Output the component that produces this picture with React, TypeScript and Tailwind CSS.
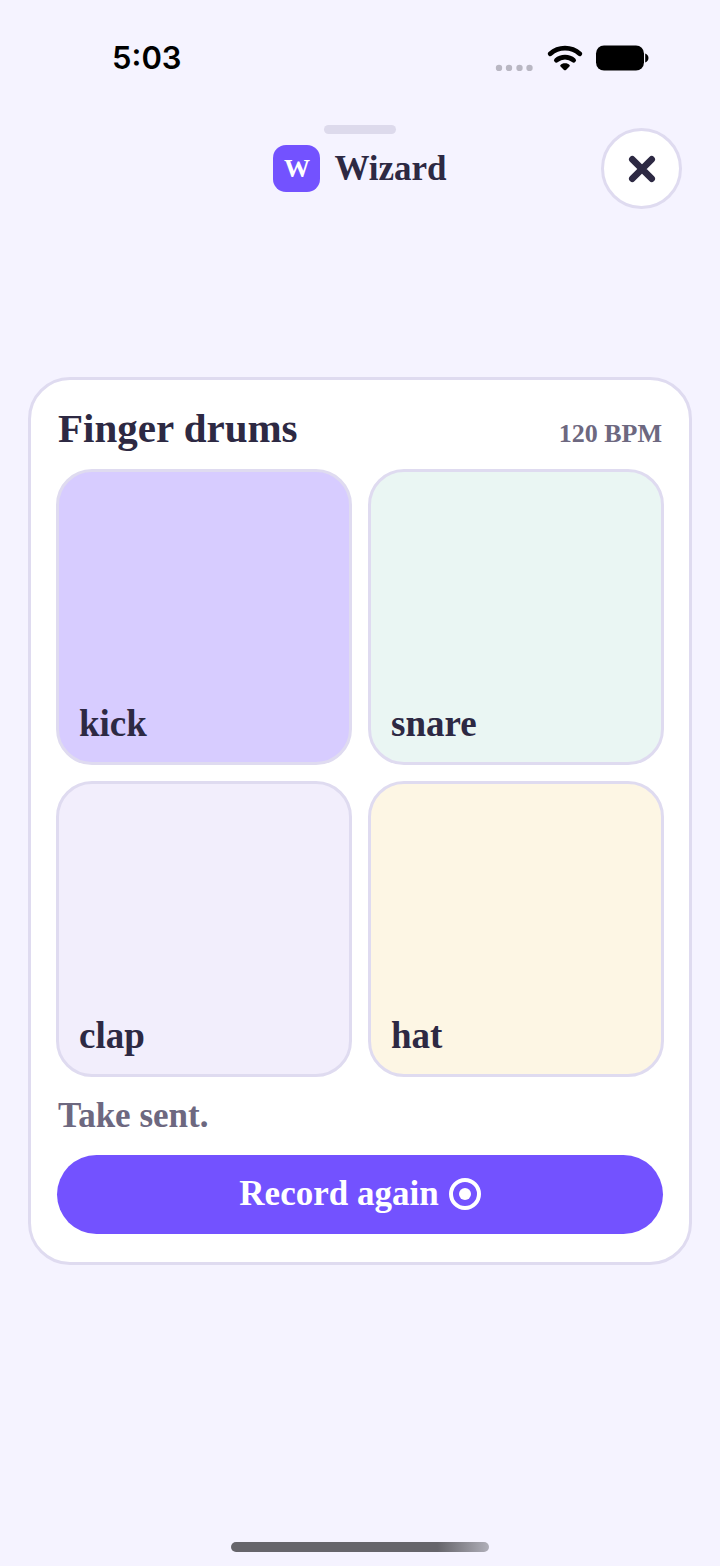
import React from "react"

const pads = [
    { name: "kick", color: "bg-[#d7ccff]" },
    { name: "snare", color: "bg-[#eaf6f3]" },
    { name: "clap", color: "bg-[#f2eefc]" },
    { name: "hat", color: "bg-[#fdf6e4]" },
]

function StatusBar() {
    return (
        <div className="flex h-[116px] items-center justify-between pl-28 pr-[71px] text-black">
            <span className="font-['Inter',sans-serif] text-[31px] font-semibold">5:03</span>
            <div className="flex items-center">
                <svg width="38" height="26" viewBox="0 0 38 26" fill="#b9b7c3" aria-hidden="true">
                    <circle cx="4" cy="23" r="3.2" />
                    <circle cx="14" cy="23" r="3.2" />
                    <circle cx="24.5" cy="23" r="3.2" />
                    <circle cx="34.5" cy="23" r="3.2" />
                </svg>
                <svg className="ml-3.5" width="36" height="28" viewBox="0 0 36 28" fill="none" stroke="#000" strokeLinecap="round" aria-hidden="true">
                    <path d="M3.3 9.8C11.5 2.2 24.5 2.2 32.7 9.8" strokeWidth="4.8" />
                    <path d="M9.4 16.2C14.2 12 21.8 12 26.6 16.2" strokeWidth="4.8" />
                    <path d="M18 19.2C20 19.2 21.6 19.9 22.5 20.9C23 21.5 22.9 22 22.4 22.5L19 25.9C18.4 26.5 17.6 26.5 17 25.9L13.6 22.5C13.1 22 13 21.5 13.5 20.9C14.4 19.9 16 19.2 18 19.2Z" fill="#000" stroke="none" />
                </svg>
                <svg className="ml-3" width="54" height="26" viewBox="0 0 54 26" aria-hidden="true">
                    <rect x="1" y="0.5" width="48" height="25" rx="8" />
                    <path d="M50.2 8.6C52.2 9.4 53.5 11 53.5 13C53.5 15 52.2 16.6 50.2 17.4Z" />
                </svg>
            </div>
        </div>
    )
}

function Header() {
    return (
        <header>
            <div className="mx-auto mt-[9px] h-[9px] w-[72px] rounded-full bg-[#dddaec]"></div>
            <div className="-mt-1.5 grid grid-cols-[1fr_auto_1fr] items-center px-[38px]">
                <div className="col-start-2 flex items-center gap-3.5">
                    <span className="flex size-[47px] items-center justify-center rounded-[13px] bg-[#7352ff] text-[26px] font-bold text-white">W</span>
                    <h1 className="text-[35px] font-bold leading-10">Wizard</h1>
                </div>
                <button type="button" aria-label="Close" className="flex size-[81px] items-center justify-center justify-self-end rounded-full border-[3px] border-[#dfdbf0] bg-white">
                    <svg width="28" height="28" viewBox="0 0 28 28" fill="none" stroke="currentColor" strokeWidth="6.6" strokeLinecap="round" aria-hidden="true">
                        <path d="M4.3 4.3L23.7 23.7M23.7 4.3L4.3 23.7" />
                    </svg>
                </button>
            </div>
        </header>
    )
}

function FingerDrums() {
    return (
        <section className="mx-7 rounded-[42px] border-[3px] border-[#dfdbf0] bg-white px-[25px] pb-7 pt-6">
            <div className="flex items-baseline justify-between px-0.5">
                <h2 className="text-[41px] font-bold leading-[48px]">Finger drums</h2>
                <span className="text-[26px] font-bold text-[#6d6880]">120 BPM</span>
            </div>
            <div className="mt-4 grid grid-cols-2 gap-4">
                {pads.map((pad) => (
                    <button
                        key={pad.name}
                        type="button"
                        className={`flex aspect-square items-end rounded-[36px] border-[3px] border-[#dfdbf0] px-5 pb-[18px] text-[37px] font-bold leading-[40px] ${pad.color}`}
                    >
                        {pad.name}
                    </button>
                ))}
            </div>
            <p className="mt-4 px-0.5 text-[35px] font-bold leading-[46px] text-[#6d6880]">Take sent.</p>
            <div className="mt-4 px-px">
                <button type="button" className="flex h-[79px] w-full items-center justify-center gap-2.5 rounded-full bg-[#7352ff] text-[35px] font-bold text-white">
                    Record again
                    <svg width="32" height="32" viewBox="0 0 32 32" fill="none" aria-hidden="true">
                        <circle cx="16" cy="16" r="14" stroke="currentColor" strokeWidth="4" />
                        <circle cx="16" cy="16" r="6" fill="currentColor" />
                    </svg>
                </button>
            </div>
        </section>
    )
}

export default function App() {
    return (
        <div className="flex min-h-screen flex-col bg-[#f5f3ff] font-['Liberation_Serif',serif] text-[#2d2943]">
            <StatusBar />
            <Header />
            <main className="flex flex-1 flex-col justify-center pb-[110px]">
                <FingerDrums />
            </main>
            <div className="mx-auto mb-3.5 h-2.5 w-[258px] rounded-full bg-linear-to-r from-[#66656b] from-80% to-[#b0afb9]"></div>
        </div>
    )
}
